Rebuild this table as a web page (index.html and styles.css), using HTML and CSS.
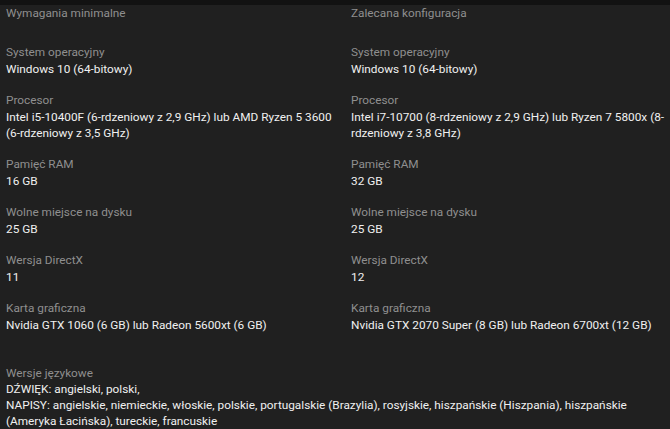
FILE: index.html
```html
<!DOCTYPE html>
<html lang="pl">
<head>
<meta charset="utf-8">
<link rel="stylesheet" href="styles.css">
</head>
<body>
<div class="topbar"></div>
<main class="page">
  <div class="cols">
    <section class="col">
      <div class="head">Wymagania minimalne</div>
      <div class="item"><div class="label">System operacyjny</div><div class="value">Windows 10 (64-bitowy)</div></div>
      <div class="item"><div class="label">Procesor</div><div class="value">Intel i5-10400F (6-rdzeniowy z 2,9 GHz) lub AMD Ryzen 5 3600 (6-rdzeniowy z 3,5 GHz)</div></div>
      <div class="item"><div class="label">Pamięć RAM</div><div class="value">16 GB</div></div>
      <div class="item"><div class="label">Wolne miejsce na dysku</div><div class="value">25 GB</div></div>
      <div class="item"><div class="label">Wersja DirectX</div><div class="value">11</div></div>
      <div class="item"><div class="label">Karta graficzna</div><div class="value">Nvidia GTX 1060 (6 GB) lub Radeon 5600xt (6 GB)</div></div>
    </section>
    <section class="col">
      <div class="head">Zalecana konfiguracja</div>
      <div class="item"><div class="label">System operacyjny</div><div class="value">Windows 10 (64-bitowy)</div></div>
      <div class="item"><div class="label">Procesor</div><div class="value">Intel i7-10700 (8-rdzeniowy z 2,9 GHz) lub Ryzen 7 5800x (8-rdzeniowy z 3,8 GHz)</div></div>
      <div class="item"><div class="label">Pamięć RAM</div><div class="value">32 GB</div></div>
      <div class="item"><div class="label">Wolne miejsce na dysku</div><div class="value">25 GB</div></div>
      <div class="item"><div class="label">Wersja DirectX</div><div class="value">12</div></div>
      <div class="item"><div class="label">Karta graficzna</div><div class="value">Nvidia GTX 2070 Super (8 GB) lub Radeon 6700xt (12 GB)</div></div>
    </section>
  </div>
  <div class="langs">
    <div class="label">Wersje językowe</div>
    <div class="lang-value">DŹWIĘK: angielski, polski,<br>NAPISY: angielskie, niemieckie, włoskie, polskie, portugalskie (Brazylia), rosyjskie, hiszpańskie (Hiszpania), hiszpańskie (Ameryka Łacińska), tureckie, francuskie</div>
  </div>
</main>
</body>
</html>
```
FILE: styles.css
```css
html, body {
  margin: 0;
  padding: 0;
  background: #202020;
  overflow: hidden;
}
body {
  font-family: Roboto, "Noto Sans", sans-serif;
  font-size: 11.8px;
  line-height: 16px;
  width: 670px;
  height: 429px;
}
.topbar {
  height: 5px;
  background: #121212;
}
.page {
  padding-left: 6px;
  width: 670px;
}
.cols {
  display: grid;
  grid-template-columns: 335px 335px;
  column-gap: 10px;
}
.head {
  color: #8f8f8f;
  margin-bottom: 23px;
}
.item {
  margin-bottom: 15px;
}
.label {
  color: #8f8f8f;
}
.value {
  color: #f0f0f0;
  margin-top: 1px;
}
.langs {
  margin-top: 17px;
}
.lang-value {
  color: #f0f0f0;
}
```
